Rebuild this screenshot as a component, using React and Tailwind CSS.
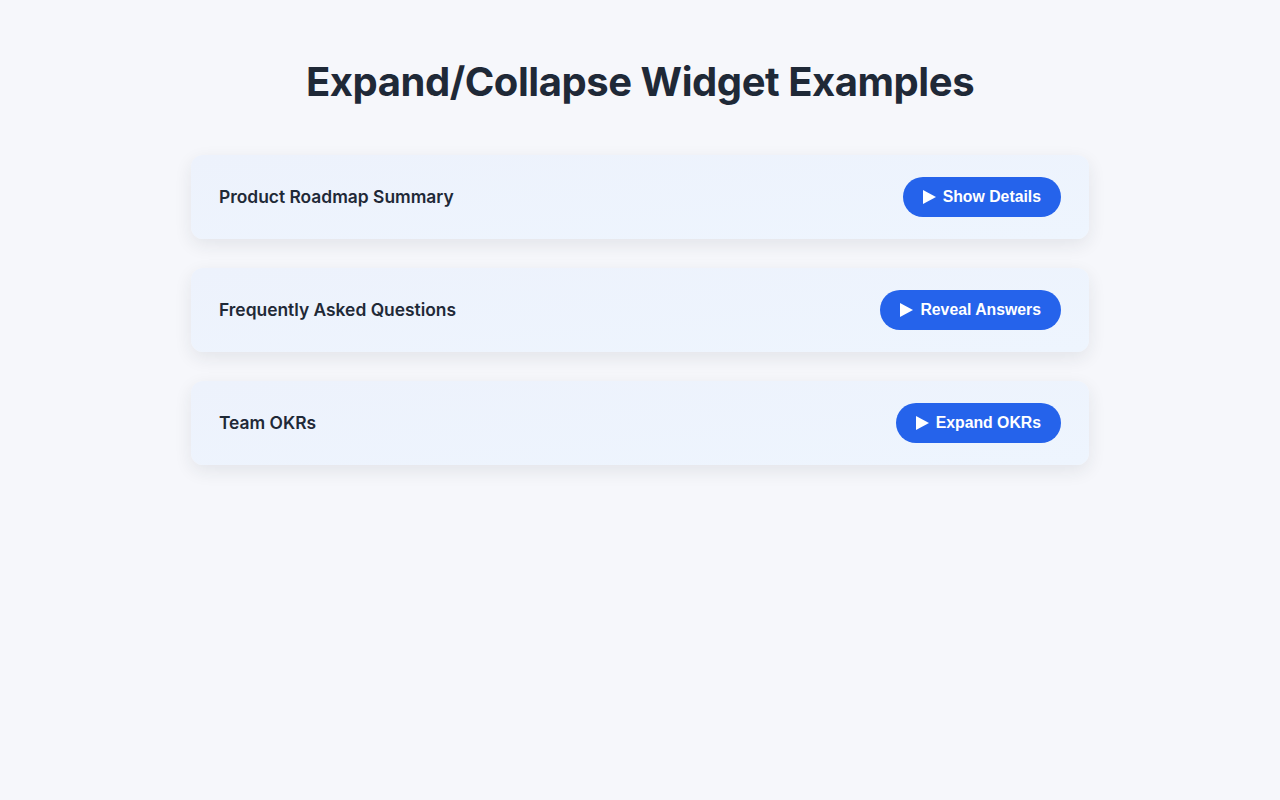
import React, { useState } from 'react';

const items = [
  { title: 'Product Roadmap Summary', label: 'Show Details', body: 'Q3 focuses on onboarding, Q4 on integrations and reporting.' },
  { title: 'Frequently Asked Questions', label: 'Reveal Answers', body: 'Answers to the most common questions from our customers.' },
  { title: 'Team OKRs', label: 'Expand OKRs', body: 'Objectives and key results for the current quarter.' },
];

function Widget({ item }) {
  const [open, setOpen] = useState(false);
  return (
    <div className="rounded-xl bg-gradient-to-br from-[#edf2fc] to-[#eef5fe] shadow-[0_6px_18px_rgba(30,41,59,0.09)]">
      <div className="flex items-center justify-between px-7 py-[22px]">
        <span className="text-[17.4px] font-semibold text-[#1f2937]">{item.title}</span>
        <button
          onClick={() => setOpen(!open)}
          className="flex h-10 items-center gap-[7px] rounded-full bg-[#2563eb] px-5 text-[15.8px] font-bold text-white font-['Liberation_Sans',Arial,sans-serif]"
        >
          <svg width="13" height="14" viewBox="0 0 13 14" className={open ? 'rotate-90' : ''}>
            <path d="M0 0 L13 7 L0 14 Z" fill="white" />
          </svg>
          {item.label}
        </button>
      </div>
      {open && <div className="px-7 pb-6 text-[15px] text-[#374151]">{item.body}</div>}
    </div>
  );
}

export default function App() {
  return (
    <div className="min-h-screen bg-[#f6f7fb] font-['Inter',sans-serif] pt-[54px]">
      <h1 className="text-center text-[40px] font-bold leading-[56px] tracking-[-0.45px] text-[#1f2937]">
        Expand/Collapse Widget Examples
      </h1>
      <div className="mx-auto mt-[45px] flex w-[898px] flex-col gap-[29px]">
        {items.map((item) => (
          <Widget key={item.title} item={item} />
        ))}
      </div>
    </div>
  );
}
